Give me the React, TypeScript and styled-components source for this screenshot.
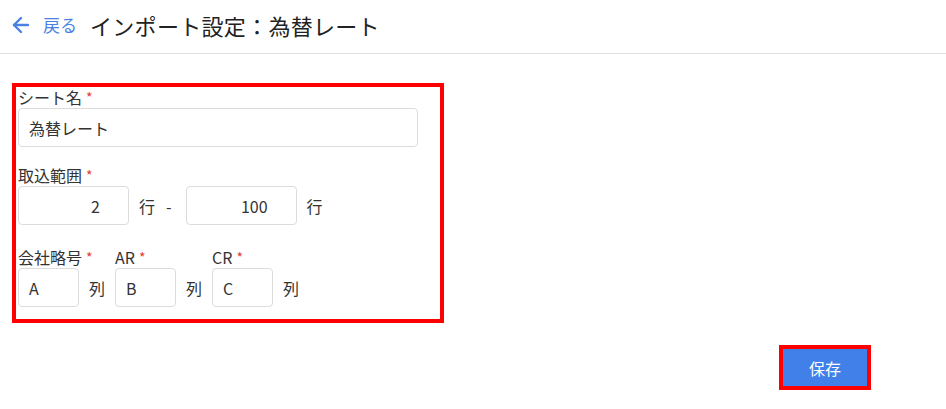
import styled, { createGlobalStyle } from 'styled-components'
import { ArrowLeft } from 'lucide-react'

const GlobalStyle = createGlobalStyle`
	body {
		margin: 0;
		background: #fff;
		font-family: 'Noto Sans CJK JP', 'Noto Sans', sans-serif;
		color: #333;
	}
`

export default function App() {
	return (
		<>
			<GlobalStyle />
			<Header>
				<BackLink>
					<ArrowLeft size={24} strokeWidth={2.4} />
					<span>戻る</span>
				</BackLink>
				<Title>インポート設定：為替レート</Title>
			</Header>
			<Main>
				<Highlight>
					<Section>
						<Label>
							シート名<Req>*</Req>
						</Label>
						<TextInput width={400} defaultValue="為替レート" />
					</Section>

					<Section>
						<Label>
							取込範囲<Req>*</Req>
						</Label>
						<Row>
							<TextInput width={111} align="right" defaultValue="2" />
							<Unit>行</Unit>
							<Dash>-</Dash>
							<TextInput width={111} align="right" defaultValue="100" />
							<Unit>行</Unit>
						</Row>
					</Section>

					<Columns>
						{[
							{ label: '会社略号', value: 'A' },
							{ label: 'AR', value: 'B' },
							{ label: 'CR', value: 'C' },
						].map((c) => (
							<Section key={c.label}>
								<Label>
									{c.label}
									<Req>*</Req>
								</Label>
								<Row>
									<TextInput width={61} defaultValue={c.value} />
									<Unit>列</Unit>
								</Row>
							</Section>
						))}
					</Columns>
				</Highlight>
				<Footer>
					<SaveButton>保存</SaveButton>
				</Footer>
			</Main>
		</>
	)
}

const Header = styled.header`
	box-sizing: border-box;
	display: flex;
	align-items: center;
	height: 54px;
	padding: 0 0 4px 9px;
	border-bottom: 1px solid #e0e0e0;
`

const BackLink = styled.a`
	display: flex;
	align-items: center;
	gap: 10px;
	color: #4a82e4;
	font-size: 17px;
	cursor: pointer;
	margin-right: 13px;
`

const Title = styled.h1`
	margin: 0;
	font-size: 22px;
	font-weight: 400;
	color: #222;
	letter-spacing: 0.3px;
`

const Main = styled.main`
	padding: 29px 0 0 12px;
`

const Highlight = styled.div`
	box-sizing: border-box;
	width: 432px;
	border: 4px solid #f00;
	padding: 0 2px 12px;
	display: flex;
	flex-direction: column;
	gap: 18px;
`

const Section = styled.div`
	display: flex;
	flex-direction: column;
`

const Label = styled.label`
	font-size: 16px;
	line-height: 20px;
	margin-bottom: 1px;
	color: #333;
`

const Req = styled.span`
	color: #e53935;
	font-size: 14px;
	margin-left: 4px;
	vertical-align: top;
`

const TextInput = styled.input<{ width: number; align?: string }>`
	box-sizing: border-box;
	width: ${({ width }) => width}px;
	height: 39px;
	border: 1px solid #dcdcdc;
	border-radius: 4px;
	padding: ${({ align }) => (align === 'right' ? '0 28px 0 10px' : '0 10px')};
	text-align: ${({ align }) => align || 'left'};
	font-family: inherit;
	font-size: 16px;
	color: #333;
	outline: none;
`

const Row = styled.div`
	display: flex;
	align-items: center;
`

const Unit = styled.span`
	font-size: 16px;
	margin: 0 10px;
`

const Dash = styled.span`
	font-size: 16px;
	margin: 0 14px 0 1px;
`

const Columns = styled.div`
	display: flex;
	margin-top: 4px;
`

const Footer = styled.div`
	display: flex;
	justify-content: flex-end;
	padding-right: 75px;
	margin-top: 22px;
`

const SaveButton = styled.button`
	box-sizing: border-box;
	width: 92px;
	height: 45px;
	background: #4080e8;
	border: 4px solid #f00;
	color: #fff;
	font-family: inherit;
	font-size: 16px;
	cursor: pointer;
`
